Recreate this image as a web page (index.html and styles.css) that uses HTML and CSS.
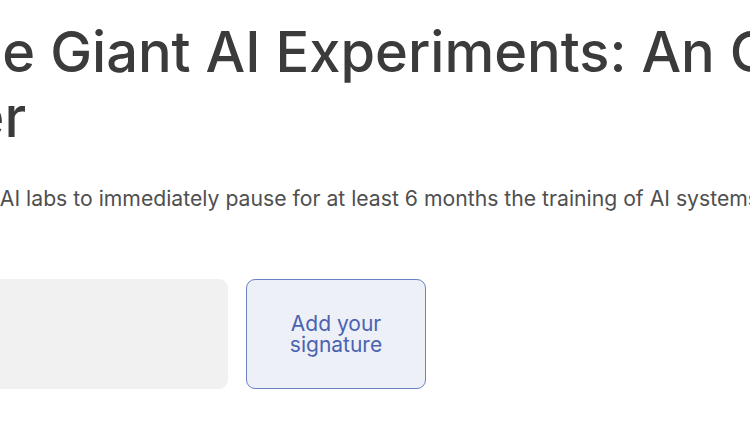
FILE: index.html
```html
<!DOCTYPE html>
<html lang="en">
<head>
<meta charset="utf-8">
<title>Pause Giant AI Experiments: An Open Letter</title>
<link rel="stylesheet" href="styles.css">
</head>
<body>
<main class="page">
  <h1 class="title">Pause Giant AI Experiments: An Open<br>Letter</h1>
  <p class="lead">We call on all AI labs to immediately pause for at least 6 months the training of AI systems more powerful than GPT-4.</p>
  <div class="actions">
    <div class="counter"></div>
    <button class="sign-btn" type="button">Add your<br>signature</button>
  </div>
</main>
</body>
</html>
```

FILE: styles.css
```css
html, body {
  margin: 0;
  padding: 0;
  background: #ffffff;
  overflow: hidden;
}

body {
  font-family: Inter, "Noto Sans", "Liberation Sans", sans-serif;
}

.page {
  margin-left: -138px;
  width: 1100px;
  padding-top: 20px;
}

.title {
  margin: 0;
  padding-left: 9px;
  font-size: 56px;
  line-height: 65px;
  font-weight: 500;
  color: #3b3b3b;
  letter-spacing: 0;
  white-space: nowrap;
}

.lead {
  margin: 33px 0 0;
  font-size: 21.2px;
  line-height: 30px;
  color: #4f4f4f;
  white-space: nowrap;
}

.actions {
  display: flex;
  gap: 18px;
  margin-top: 66px;
}

.counter {
  width: 366px;
  height: 110px;
  background: #f1f1f2;
  border-radius: 9px;
}

.sign-btn {
  box-sizing: border-box;
  width: 180px;
  height: 110px;
  margin: 0;
  padding: 0 12px;
  border: 1.5px solid #6a81c4;
  border-radius: 9px;
  background: #eef0f8;
  color: #4a63b0;
  font-family: Inter, "Noto Sans", "Liberation Sans", sans-serif;
  font-size: 21px;
  line-height: 21px;
  font-weight: 400;
  text-align: center;
  cursor: pointer;
}
```
